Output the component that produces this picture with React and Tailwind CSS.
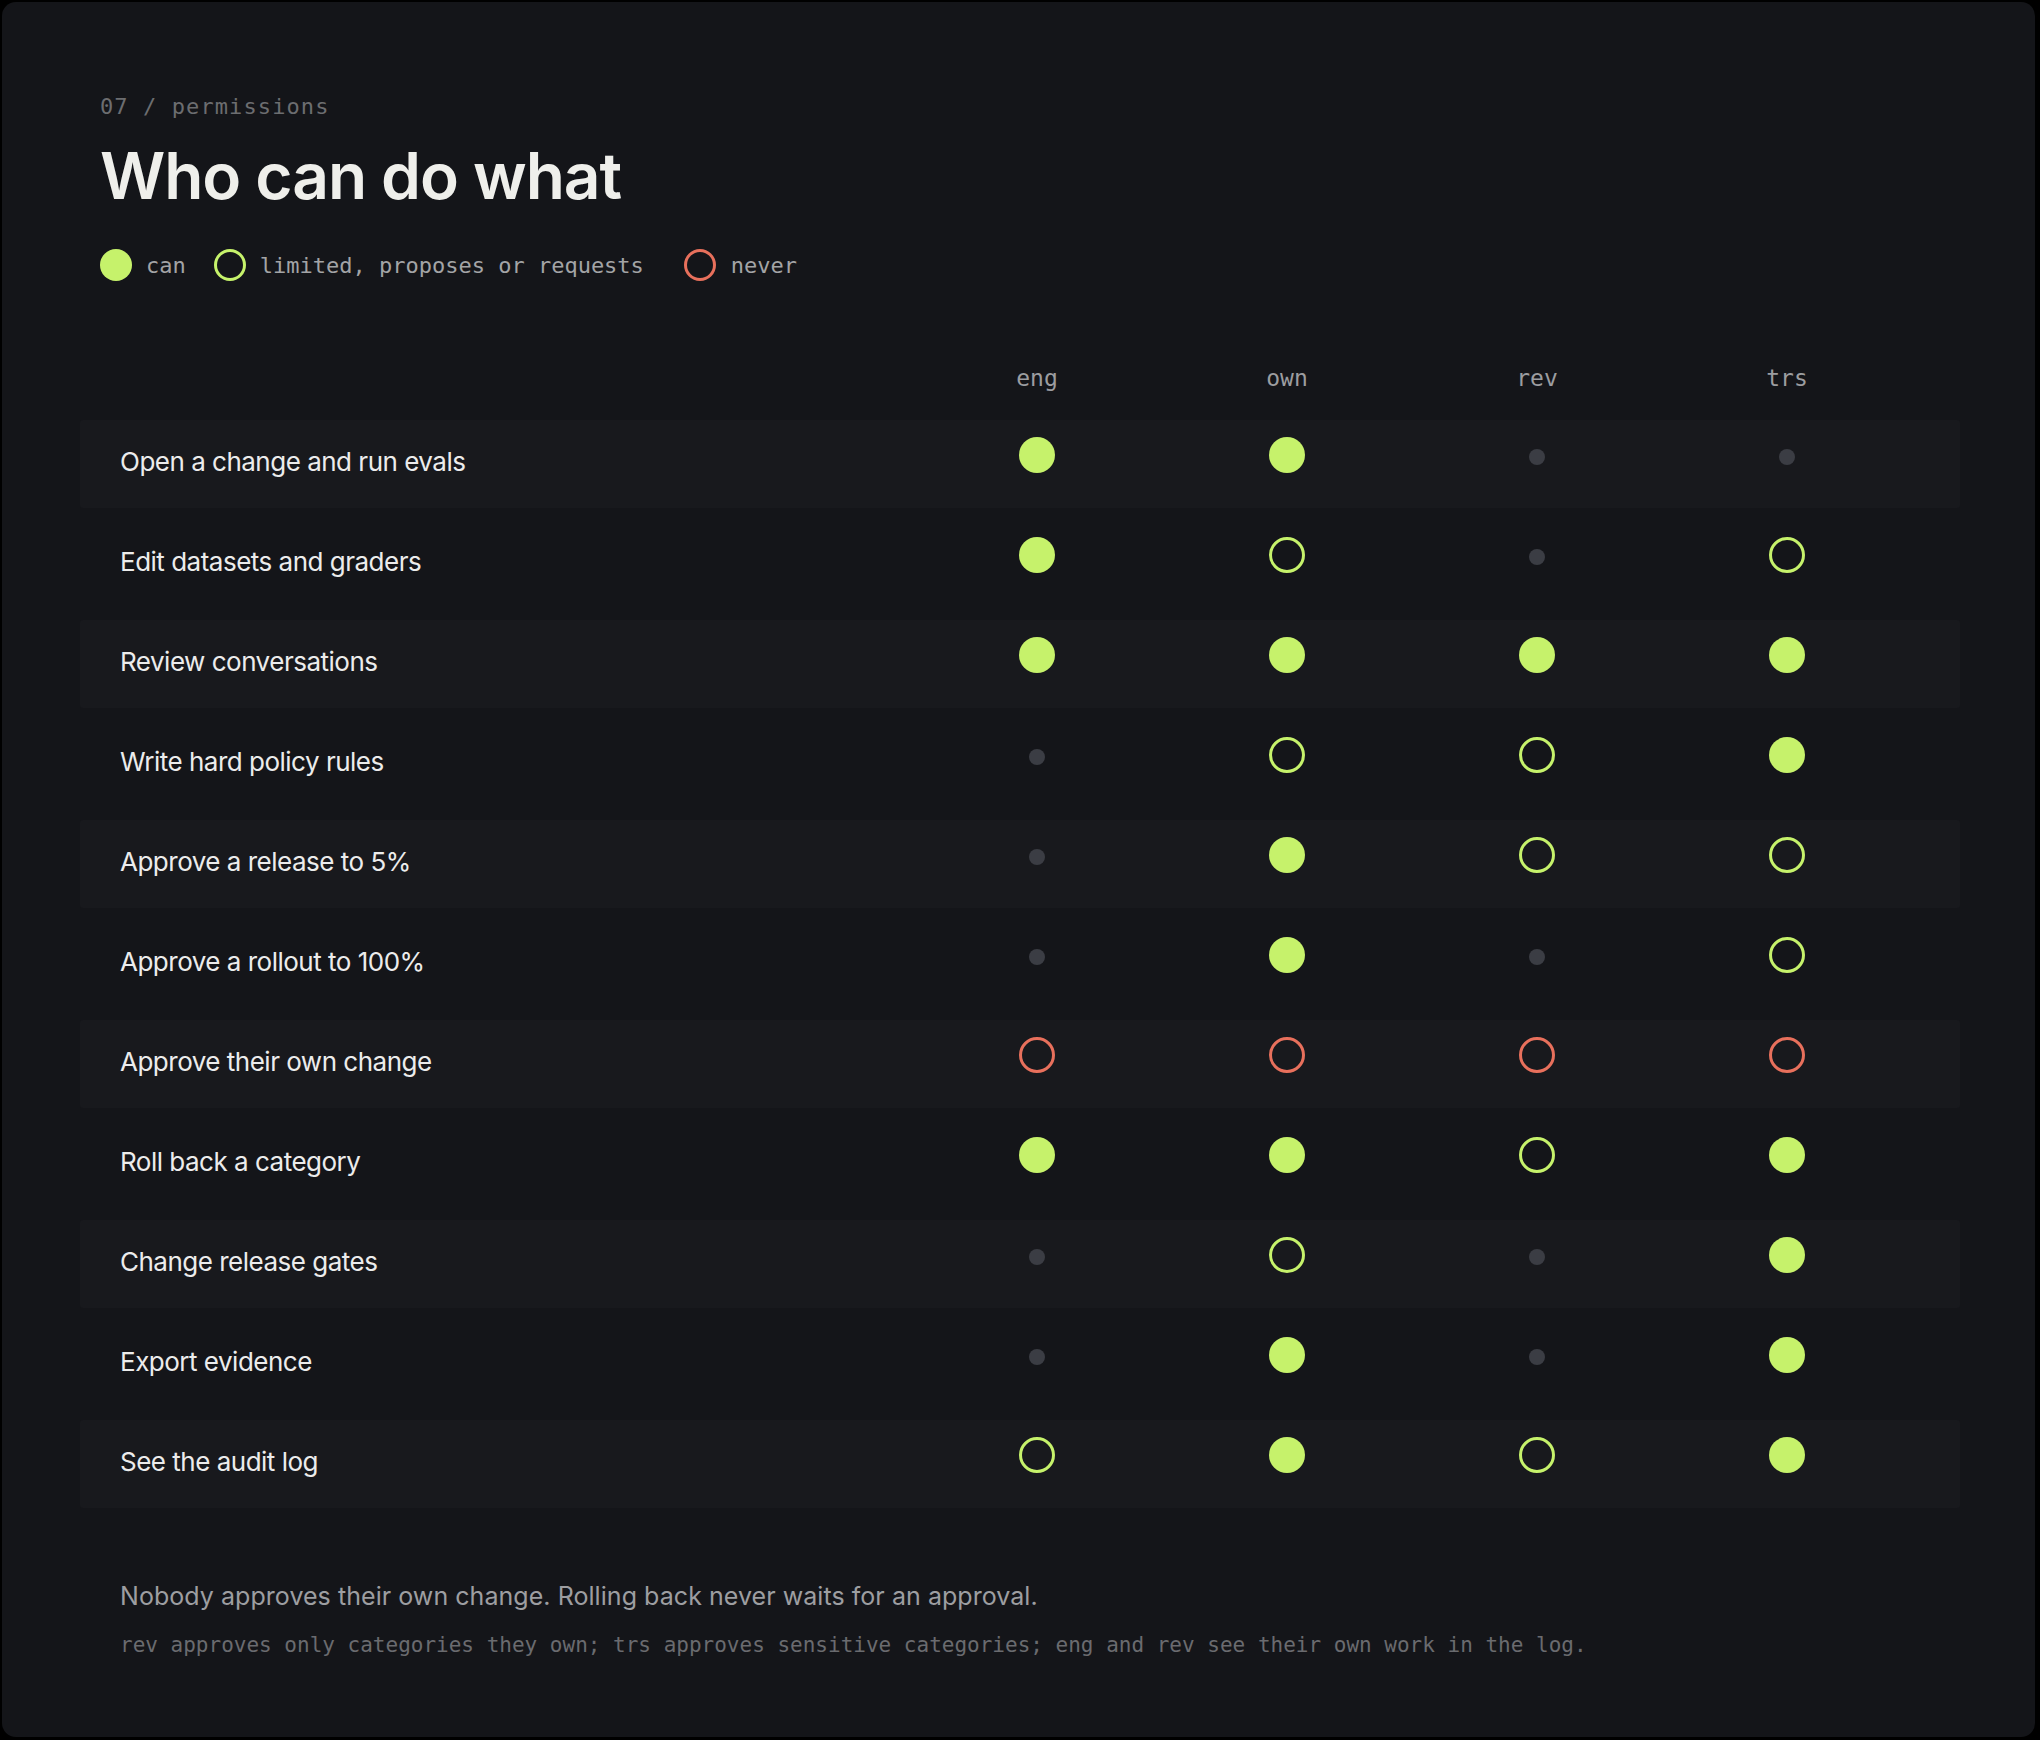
import React from "react";

const roles = ["eng", "own", "rev", "trs"];

// F = can, O = limited, N = no access, X = never
const rows = [
  ["Open a change and run evals", "FFNN"],
  ["Edit datasets and graders", "FONO"],
  ["Review conversations", "FFFF"],
  ["Write hard policy rules", "NOOF"],
  ["Approve a release to 5%", "NFOO"],
  ["Approve a rollout to 100%", "NFNO"],
  ["Approve their own change", "XXXX"],
  ["Roll back a category", "FFOF"],
  ["Change release gates", "NONF"],
  ["Export evidence", "NFNF"],
  ["See the audit log", "OFOF"],
];

const mono = "font-['DejaVu_Sans_Mono','Liberation_Mono',monospace]";
const sans = "font-['Inter','Noto_Sans',sans-serif]";

function Mark({ kind }) {
  if (kind === "F") return <span className="block w-9 h-9 rounded-full bg-[#c6f26b]" />;
  if (kind === "O") return <span className="block w-9 h-9 rounded-full border-[3px] border-[#c6f26b]" />;
  if (kind === "X") return <span className="block w-9 h-9 rounded-full border-[3px] border-[#e8705c]" />;
  return <span className="block w-4 h-4 mt-1 rounded-full bg-[#3b3d44]" />;
}

export default function App() {
  return (
    <div className="min-h-screen bg-black pt-[2px] pl-[2px] pr-[5px] pb-[3px]">
      <div className={`h-[1735px] rounded-[14px] bg-[#141519] pl-[78px] pr-[75px] pt-[91px] ${sans}`}>
        {/* Header */}
        <div className="pl-5">
          <div className={`${mono} text-[22px] leading-[28px] tracking-[1.1px] text-[#6c6d70]`}>07 / permissions</div>
          <h1 className="mt-[23px] text-[64px] leading-none font-semibold tracking-[-1.05px] text-[#efefeb]">
            Who can do what
          </h1>
          <div className={`mt-[41px] flex items-center h-8 ${mono} text-[22px] text-[#a3a4a6]`}>
            <span className="w-8 h-8 rounded-full bg-[#c6f26b]" />
            <span className="ml-[14px]">can</span>
            <span className="ml-[28px] w-8 h-8 rounded-full border-[3px] border-[#c6f26b]" />
            <span className="ml-[14px]">limited, proposes or requests</span>
            <span className="ml-[40px] w-8 h-8 rounded-full border-[3px] border-[#e8705c]" />
            <span className="ml-[15px]">never</span>
          </div>
        </div>

        {/* Column headers */}
        <div className={`mt-[83px] flex ${mono} text-[23px] leading-[28px] text-[#9c9da0]`}>
          <div className="flex-1" />
          {roles.map((r) => (
            <div key={r} className="w-[250px] text-center">{r}</div>
          ))}
          <div className="w-[48px]" />
        </div>

        {/* Matrix */}
        <div className="mt-[28px] flex flex-col gap-3">
          {rows.map(([label, marks], i) => (
            <div
              key={label}
              className={`flex h-[88px] rounded-[3px] ${i % 2 === 0 ? "bg-[#18191d]" : ""}`}
            >
              <div className="flex-1 flex items-center pl-10 pb-[5px] text-[26px] tracking-[-0.5px] text-[#ececec]">
                {label}
              </div>
              {marks.split("").map((m, j) => (
                <div key={j} className="w-[250px] flex justify-center pt-[17px]">
                  <div className="h-9 flex items-center justify-center">
                    <Mark kind={m} />
                  </div>
                </div>
              ))}
              <div className="w-[48px]" />
            </div>
          ))}
        </div>

        {/* Footnote */}
        <div className="pl-10">
          <p className="mt-[72px] text-[25px] leading-[32px] tracking-[0.05px] text-[#9d9ea1]">
            Nobody approves their own change. Rolling back never waits for an approval.
          </p>
          <p className={`mt-[19px] ${mono} text-[21px] leading-[28px] text-[#6a6b6f]`}>
            rev approves only categories they own; trs approves sensitive categories; eng and rev see their own work in the log.
          </p>
        </div>
      </div>
    </div>
  );
}
